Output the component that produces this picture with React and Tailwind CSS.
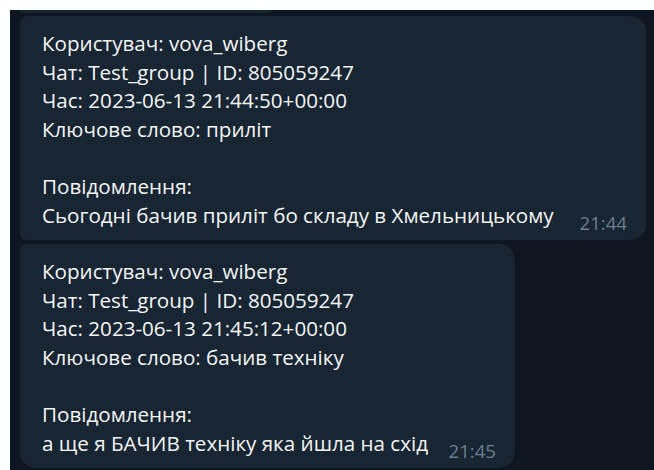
import React from 'react';

const messages = [
  {
    id: 1,
    width: 'w-[626px]',
    corners: 'rounded-[16px] rounded-tl-[7px] rounded-bl-[6px]',
    time: '21:44',
    lines: [
      'Користувач: vova_wiberg',
      'Чат: Test_group | ID: 805059247',
      'Час: 2023-06-13 21:44:50+00:00',
      'Ключове слово: приліт',
      '',
      'Повідомлення:',
    ],
    text: 'Сьогодні бачив приліт бо складу в Хмельницькому',
  },
  {
    id: 2,
    width: 'w-[495px]',
    corners: 'rounded-[16px] rounded-tl-[6px]',
    time: '21:45',
    lines: [
      'Користувач: vova_wiberg',
      'Чат: Test_group | ID: 805059247',
      'Час: 2023-06-13 21:45:12+00:00',
      'Ключове слово: бачив техніку',
      '',
      'Повідомлення:',
    ],
    text: 'а ще я БАЧИВ техніку яка йшла на схід',
  },
];

function Bubble({ msg }) {
  return (
    <div
      className={`${msg.width} ${msg.corners} bg-[#182533] pl-[22px] pr-[19px] pt-[13px] pb-[8px] text-[#f5f5f5]`}
    >
      {msg.lines.map((line, i) => (
        <div key={i} className="h-[28.6px] leading-[28.6px] whitespace-pre">
          {line}
        </div>
      ))}
      <div className="flex items-end justify-between">
        <span className="leading-[28.6px] mb-[3px] whitespace-pre">{msg.text}</span>
        <span className="text-[18.6px] leading-[18px] text-[#6d7f8f]">{msg.time}</span>
      </div>
    </div>
  );
}

export default function App() {
  return (
    <div
      className="w-[654px] h-[470px] bg-white pt-[10px] pl-[10px] overflow-hidden"
      style={{ fontFamily: '"Open Sans", "Noto Sans", sans-serif' }}
    >
      <div className="h-full bg-[#0e1621] pl-[10px] flex flex-col text-[20.6px]">
        {/* tail of the previous message, mostly scrolled off */}
        <div className="h-[3px] w-[252px] bg-[#182533] rounded-br-[14px] rounded-bl-[4px] shrink-0" />
        <div className="flex flex-col gap-[4px] pt-[3px]">
          {messages.map((m) => (
            <Bubble key={m.id} msg={m} />
          ))}
        </div>
      </div>
    </div>
  );
}
